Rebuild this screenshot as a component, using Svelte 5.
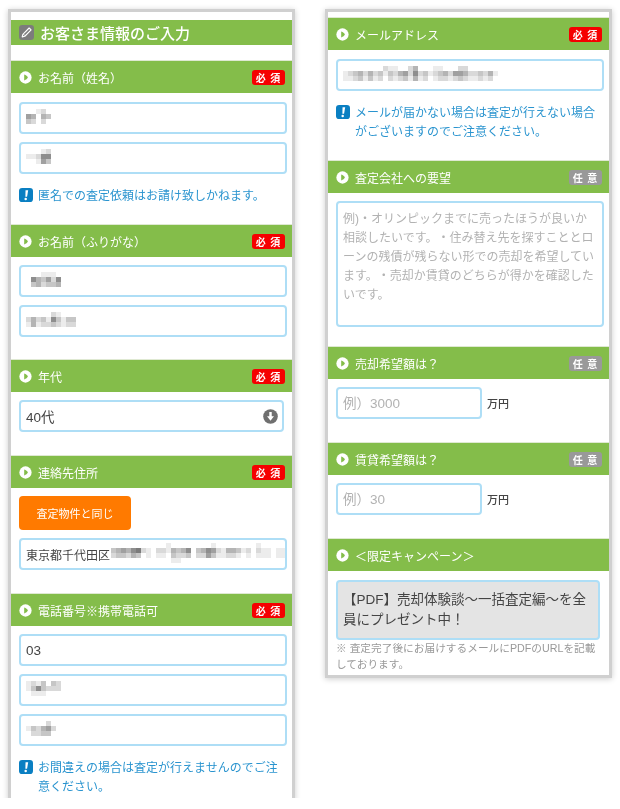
<script>
  const mosaics = {
    name1: ['00120', '54043', '32020'],
    name2: ['000120', '112660', '001530'],
    kana1: ['00011100', '06435260', '03423340'],
    kana2: ['0000021000', '2423163133', '1412232122'],
    address: [
      '00000000000100000000100000000100000',
      '34546721022143460346521443120211011',
      '23324301011032230225311221010111011',
      '00000000000011000000000000000000000'
    ],
    phone1: ['1213032', '1363222', '0111000'],
    phone2: ['000020', '132452', '022330'],
    email: [
      '0000000021100240001100022000000',
      '1234242313245262312342554223241',
      '1123131202123141201221232112120'
    ]
  };
</script>

{#snippet arrow()}
  <svg class="arrow" viewBox="0 0 14 14" aria-hidden="true">
    <circle cx="7" cy="7" r="6.6" fill="#fff" />
    <path d="M5.6 3.9c2 .7 3.4 1.8 4 3.1-.6 1.3-2 2.4-4 3.1z" fill="#84bd4a" />
  </svg>
{/snippet}

{#snippet header(label, required)}
  <div class="sec-head">
    {@render arrow()}
    <span class="sec-label">{label}</span>
    {#if required === true}
      <span class="badge req">必 須</span>
    {:else if required === false}
      <span class="badge opt">任 意</span>
    {/if}
  </div>
{/snippet}

{#snippet redacted(rows)}
  <svg class="mosaic" width={rows[0].length * 5} height={rows.length * 5} aria-hidden="true">
    {#each rows as row, y}
      {#each row.split('') as d, x}
        <rect x={x * 5} y={y * 5} width="5" height="5" fill="#555" fill-opacity={d / 9} />
      {/each}
    {/each}
  </svg>
{/snippet}

{#snippet note(text)}
  <div class="note">
    <svg class="info" viewBox="0 0 18 18" aria-hidden="true">
      <rect width="18" height="18" rx="4" fill="#0a7fc2" />
      <path d="M8.4 3h3.4l-1.4 8.4H8.2z" fill="#fff" />
      <circle cx="8.6" cy="14" r="1.6" fill="#fff" />
    </svg>
    <p>{text}</p>
  </div>
{/snippet}

<div class="page">
  <section class="panel left">
    <h1 class="title">
      <svg class="pencil" viewBox="0 0 16 16" aria-hidden="true">
        <rect width="16" height="16" rx="3.5" fill="#7c7c7c" />
        <path d="M10.8 3.2 12.9 5.3 6.2 12 3.4 12.7 4.1 9.9z" fill="none" stroke="#fff" stroke-width="1.2" stroke-linejoin="round" />
        <path d="M4.6 9.6 6.5 11.5" stroke="#fff" stroke-width=".8" />
      </svg>
      お客さま情報のご入力
    </h1>

    {@render header('お名前（姓名）', true)}
    <div class="body with-note first">
      <div class="field">{@render redacted(mosaics.name1)}</div>
      <div class="field">{@render redacted(mosaics.name2)}</div>
      {@render note('匿名での査定依頼はお請け致しかねます。')}
    </div>

    {@render header('お名前（ふりがな）', true)}
    <div class="body kana">
      <div class="field">{@render redacted(mosaics.kana1)}</div>
      <div class="field">{@render redacted(mosaics.kana2)}</div>
    </div>

    {@render header('年代', true)}
    <div class="body">
      <div class="field select">
        <span>40代</span>
        <svg class="down" viewBox="0 0 16 16" aria-hidden="true">
          <circle cx="8" cy="8" r="7.8" fill="#6f6f6f" />
          <path d="M6.7 3.2h2.6v4.6h2.4L8 12.4 4.3 7.8h2.4z" fill="#fff" />
        </svg>
      </div>
    </div>

    {@render header('連絡先住所', true)}
    <div class="body">
      <button class="orange" type="button">査定物件と同じ</button>
      <div class="field address"><span>東京都千代田区</span>{@render redacted(mosaics.address)}</div>
    </div>

    {@render header('電話番号※携帯電話可', true)}
    <div class="body last">
      <input class="field" type="text" value="03" />
      <div class="field">{@render redacted(mosaics.phone1)}</div>
      <div class="field">{@render redacted(mosaics.phone2)}</div>
      {@render note('お間違えの場合は査定が行えませんのでご注意ください。')}
    </div>
  </section>

  <section class="panel right">
    {@render header('メールアドレス', true)}
    <div class="body with-note first">
      <div class="field">{@render redacted(mosaics.email)}</div>
      {@render note('メールが届かない場合は査定が行えない場合がございますのでご注意ください。')}
    </div>

    {@render header('査定会社への要望', false)}
    <div class="body plain-area">
      <textarea class="field area" placeholder="例)・オリンピックまでに売ったほうが良いか相談したいです。・住み替え先を探すこととローンの残債が残らない形での売却を希望しています。・売却か賃貸のどちらが得かを確認したいです。"></textarea>
    </div>

    {@render header('売却希望額は？', false)}
    <div class="body amount">
      <input class="field short" type="text" placeholder="例）3000" />
      <span class="unit">万円</span>
    </div>

    {@render header('賃貸希望額は？', false)}
    <div class="body amount">
      <input class="field short" type="text" placeholder="例）30" />
      <span class="unit">万円</span>
    </div>

    {@render header('＜限定キャンペーン＞')}
    <div class="body campaign">
      <div class="promo">【PDF】売却体験談〜一括査定編〜を全員にプレゼント中！</div>
      <p class="fine">※ 査定完了後にお届けするメールにPDFのURLを記載しております。</p>
    </div>
  </section>
</div>

<style>
  :global(body) {
    margin: 0;
    background: #fff;
  }
  .page {
    display: flex;
    align-items: flex-start;
    gap: 36px;
    padding: 12px 0 0 11px;
    font-family: "Liberation Sans", "Noto Sans CJK JP", sans-serif;
    color: #444;
    text-spacing-trim: space-all;
  }
  .panel {
    width: 281px;
    box-sizing: border-box;
    background: #fff;
    box-shadow: 0 0 0 3px #d0d0d0, 0 1px 6px 3px rgba(0, 0, 0, 0.2);
    filter: blur(0.35px);
  }
  .left {
    height: 786px;
    padding-top: 8px;
  }
  .right {
    height: 663px;
    padding-top: 5px;
  }
  .title {
    display: flex;
    align-items: center;
    gap: 6px;
    height: 25px;
    margin: 0 0 15px;
    padding-left: 8px;
    background: #84bd4a;
    color: #fff;
    font-size: 15px;
    line-height: 25px;
    font-weight: 500;
    font-family: "Noto Sans CJK JP", sans-serif;
  }
  .pencil {
    width: 15px;
    height: 15px;
  }
  .sec-head {
    display: flex;
    align-items: center;
    height: 33px;
    padding: 0 7.5px 0 8px;
    background: #84bd4a;
    color: #fff;
    border-top: 1px solid #dfe9d2;
    box-sizing: border-box;
  }
  .arrow {
    width: 13px;
    height: 13px;
    flex: none;
    margin-right: 6px;
  }
  .sec-label {
    flex: 1;
    font-family: "Noto Sans CJK JP", sans-serif;
    font-size: 12px;
    font-weight: 400;
  }
  .badge {
    width: 33px;
    height: 15px;
    border-radius: 3px;
    color: #fff;
    font-family: "Noto Sans CJK JP", sans-serif;
    font-size: 10px;
    font-weight: 700;
    line-height: 15px;
    text-align: center;
    word-spacing: 2px;
  }
  .req {
    background: #f50000;
  }
  .opt {
    background: #999;
  }
  .body {
    display: flex;
    flex-direction: column;
    gap: 8px;
    padding: 8px 5px 23px 8px;
  }
  .first {
    padding-top: 9px;
  }
  .with-note {
    padding-bottom: 18px;
  }
  .plain-area {
    padding-bottom: 19px;
  }
  .kana {
    padding-bottom: 22px;
  }
  .last {
    padding-bottom: 0;
  }
  .field {
    display: flex;
    align-items: center;
    box-sizing: border-box;
    width: 100%;
    height: 32px;
    margin: 0;
    padding: 0 5px;
    background: #fff;
    border: 2px solid #aedef6;
    border-radius: 4px;
    color: #444;
    font: inherit;
    font-size: 12px;
    outline: none;
  }
  input.field {
    font-size: 13.5px;
  }
  input.field::placeholder,
  textarea.field::placeholder {
    color: #b2b2b2;
    opacity: 1;
  }
  .select {
    width: 265px;
    justify-content: space-between;
    padding-right: 4px;
    font-size: 13.5px;
  }
  .down {
    width: 15px;
    height: 15px;
  }
  .mosaic {
    flex: none;
    margin-bottom: 3px;
    filter: blur(0.6px);
  }
  .address {
    padding-right: 0;
    overflow: hidden;
  }
  .address span {
    flex: none;
    margin-right: 1px;
  }
  .orange {
    width: 112px;
    height: 34px;
    border: none;
    border-radius: 4px;
    background: #ff7a00;
    color: #fff;
    font: inherit;
    font-size: 11px;
    font-weight: 400;
  }
  .note {
    display: flex;
    gap: 5px;
    margin-top: 5px;
    color: #2a94cf;
  }
  .note p {
    margin: 0;
    font-size: 12px;
    line-height: 19px;
  }
  .info {
    flex: none;
    width: 14px;
    height: 14px;
    margin-top: 1px;
  }
  .area {
    display: block;
    height: 126px;
    padding: 7px 5px 5px;
    font-size: 12px;
    line-height: 19px;
    resize: none;
  }
  .amount {
    flex-direction: row;
    align-items: center;
    gap: 5px;
  }
  .short {
    width: 146px;
  }
  .unit {
    font-size: 11px;
    font-weight: 500;
  }
  .campaign {
    gap: 0;
    padding-top: 9px;
    padding-bottom: 0;
  }
  .promo {
    box-sizing: border-box;
    width: 264px;
    height: 60px;
    padding: 8px 5px;
    background: #e4e4e4;
    border: 2px solid #aedef6;
    border-radius: 4px;
    font-size: 13.5px;
    line-height: 20px;
  }
  .fine {
    width: 262px;
    margin: 0;
    color: #999;
    font-size: 10.7px;
    line-height: 16px;
  }
</style>
